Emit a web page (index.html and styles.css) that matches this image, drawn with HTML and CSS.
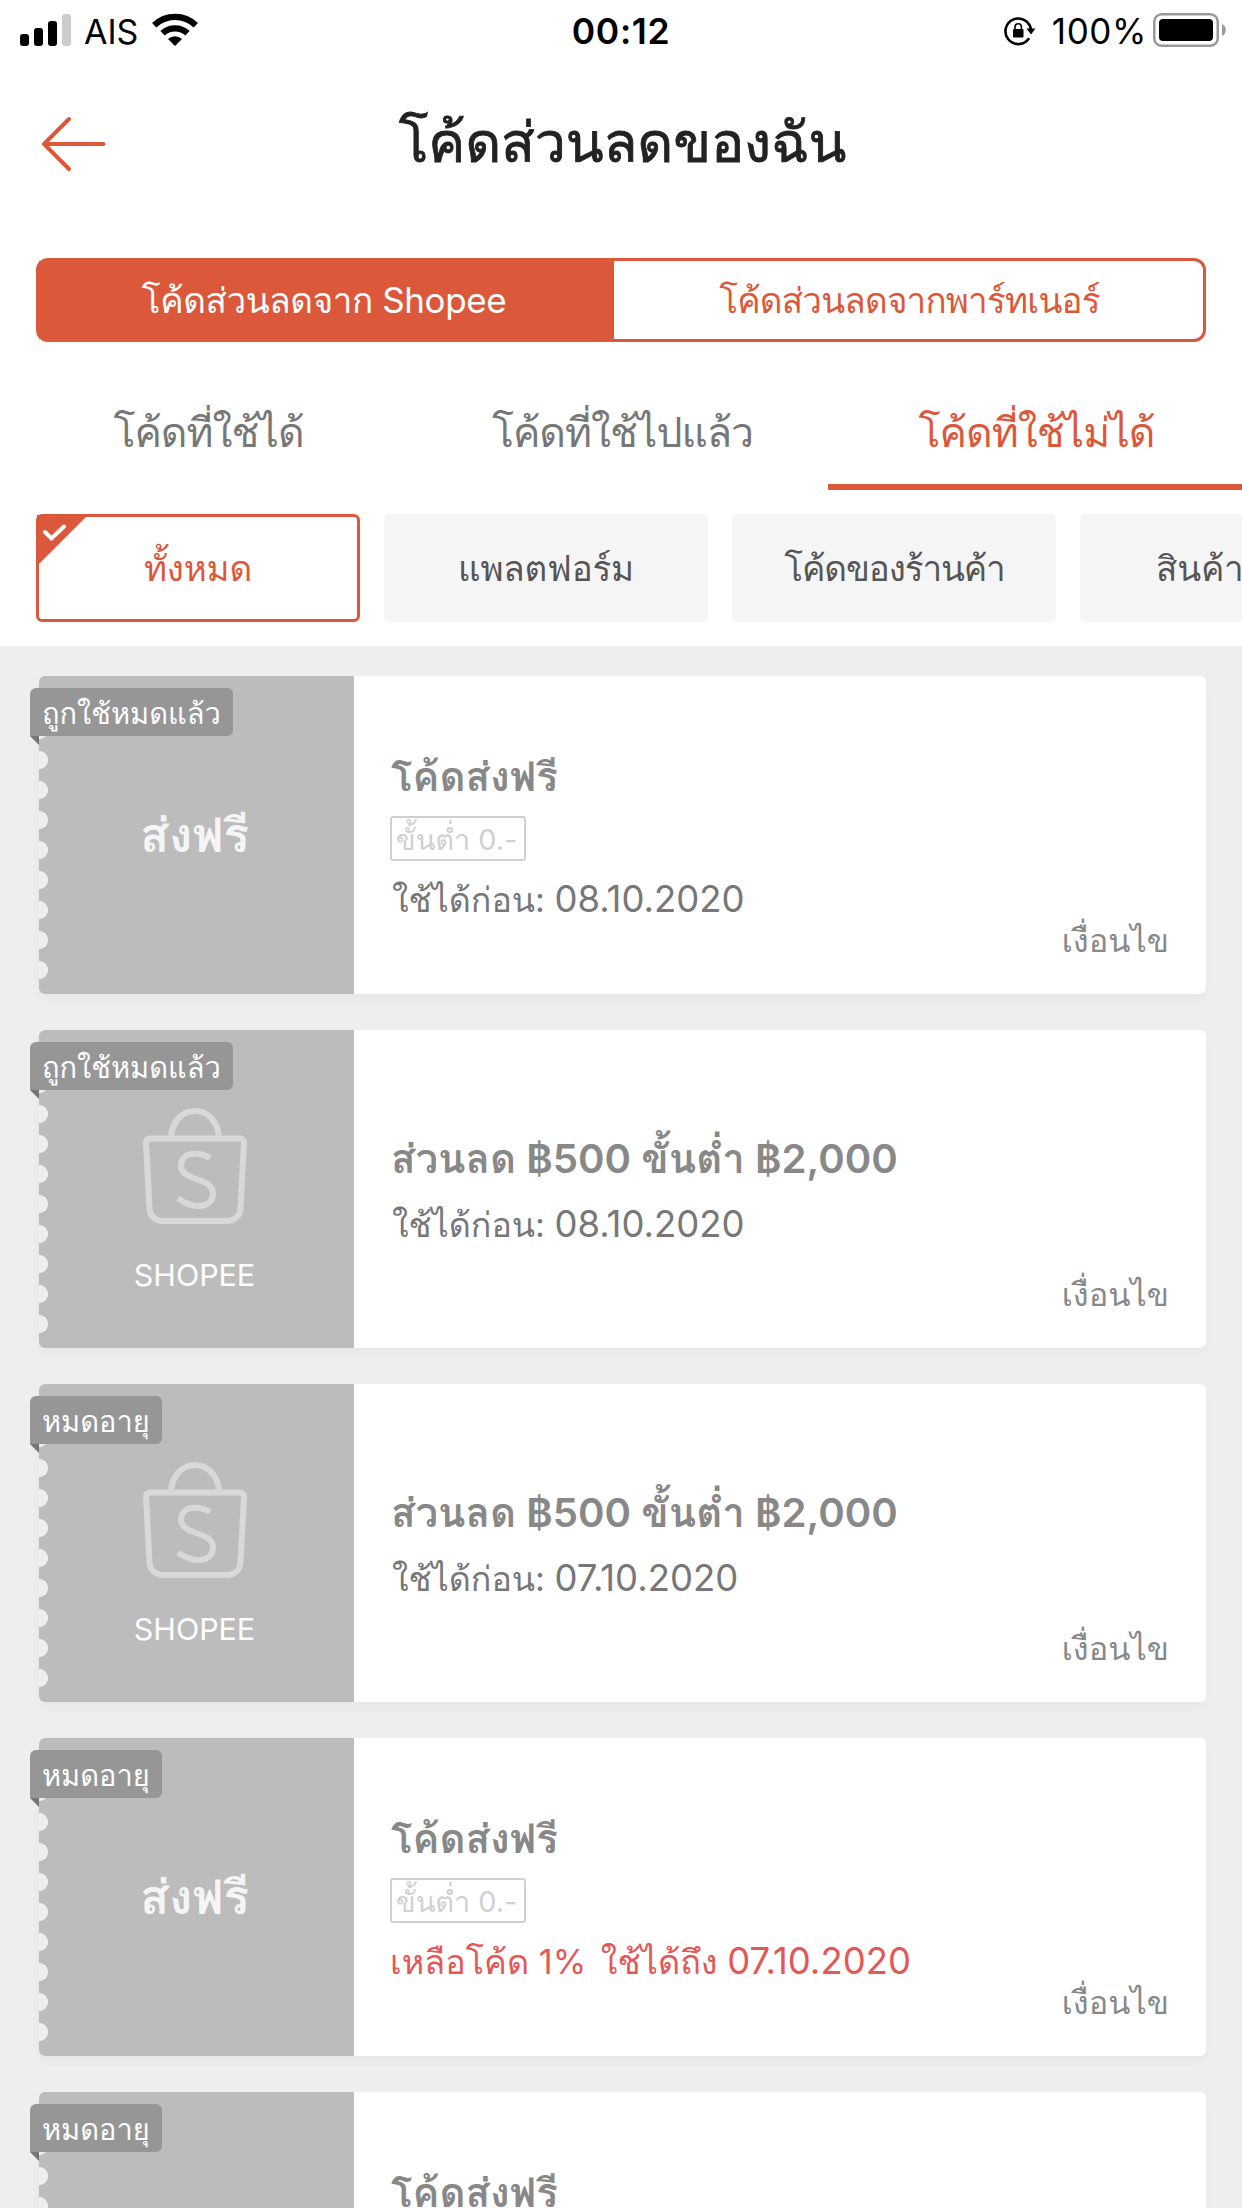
FILE: index.html
```
<!DOCTYPE html>
<html lang="th">
<head>
<meta charset="utf-8">
<title>โค้ดส่วนลดของฉัน</title>
<link rel="stylesheet" href="styles.css">
</head>
<body>
<svg class="symbols" aria-hidden="true">
  <symbol id="bag" viewBox="0 0 104 116">
    <g fill="none" stroke="currentColor" stroke-width="6">
      <path d="M28 29C29 14 39 3 52 3s23 11 24 26"/>
      <path d="M7 30.500h90a4 4 0 0 1 4 4L97.500 100a13 13 0 0 1-12.500 13H19a13 13 0 0 1-12.500-13L3 34.500a4 4 0 0 1 4-4z"/>
      <path d="M67 50C56 43 38 44 38 57.500c0 16.500 32 11 32 28 0 15-20 16-35 5"/>
    </g>
  </symbol>
</svg>

<header class="status">
  <div class="status-left">
    <svg width="51" height="32" viewBox="0 0 51 32"><rect y="20" width="9" height="12" rx="3"/><rect x="14" y="14" width="9" height="18" rx="3"/><rect x="28" y="7" width="9" height="25" rx="3"/><rect x="42" width="9" height="32" rx="3" fill="#ccc"/></svg>
    <span class="carrier">AIS</span>
    <svg width="46" height="33" viewBox="0 0 46 33"><path d="M23 33l-7-7a10.500 10.500 0 0 1 14 0z"/><path fill="none" stroke="#000" stroke-width="6.200" d="M10.500 20.300a18.500 18.500 0 0 1 25 0M2.200 12.300a30 30 0 0 1 41.600 0"/></svg>
  </div>
  <span class="time">00:12</span>
  <div class="status-right">
    <svg width="32" height="30" viewBox="0 0 32 30"><path fill="none" stroke="#000" stroke-width="2.600" stroke-linecap="round" d="M27 14A12.800 12.800 0 1 0 24.500 23"/><path d="M22.500 12.500h9L27 18.500z"/><rect x="9" y="13" width="10.500" height="8.500" rx="1"/><path fill="none" stroke="#000" stroke-width="1.600" d="M11 14v-3a3.200 3.200 0 0 1 6.400 0v3"/></svg>
    <span class="percent">100%</span>
    <svg width="74" height="34" viewBox="0 0 74 34"><rect x="1.250" y="1.250" width="63.500" height="31.500" rx="7.500" fill="none" stroke="#999" stroke-width="2.500"/><rect x="6" y="6" width="54" height="22" rx="4"/><path d="M69 11c5 2 5 10 0 12z" fill="#999"/></svg>
  </div>
</header>

<div class="navbar">
  <svg class="back" width="64" height="56" viewBox="0 0 64 56"><path fill="none" stroke="currentColor" stroke-width="4" stroke-linecap="round" stroke-linejoin="round" d="M27 3L2 28 27 53M2.500 28h59"/></svg>
  <h1>โค้ดส่วนลดของฉัน</h1>
</div>

<div class="segment">
  <div class="segment-item active">โค้ดส่วนลดจาก Shopee</div>
  <div class="segment-item">โค้ดส่วนลดจากพาร์ทเนอร์</div>
</div>

<nav class="tabs">
  <div class="tab">โค้ดที่ใช้ได้</div>
  <div class="tab">โค้ดที่ใช้ไปแล้ว</div>
  <div class="tab active">โค้ดที่ใช้ไม่ได้</div>
</nav>

<div class="chips">
  <div class="chip active"><svg class="tick" width="51" height="51" viewBox="0 0 51 51"><path fill="currentColor" d="M0 0h51L0 51z"/><path fill="none" stroke="#fff" stroke-width="4" stroke-linecap="round" d="M8 17l6.500 6.500L27 11.500"/></svg>ทั้งหมด</div>
  <div class="chip">แพลตฟอร์ม</div>
  <div class="chip tight">โค้ดของร้านค้า</div>
  <div class="chip cut">สินค้า</div>
</div>

<main class="list">
  <article class="card">
    <div class="badge">ถูกใช้หมดแล้ว</div>
    <div class="stub"><span class="free">ส่งฟรี</span></div>
    <div class="info"><h2>โค้ดส่งฟรี</h2><span class="minimum">ขั้นต่ำ 0.-</span><p class="date">ใช้ได้ก่อน: <span class="digits">08.10.2020</span></p></div>
    <div class="terms">เงื่อนไข</div>
  </article>
  <article class="card">
    <div class="badge">ถูกใช้หมดแล้ว</div>
    <div class="stub shop"><svg class="bag"><use href="#bag"/></svg><span class="brand">SHOPEE</span></div>
    <div class="info"><h2>ส่วนลด ฿500 ขั้นต่ำ ฿2,000</h2><p class="date">ใช้ได้ก่อน: <span class="digits">08.10.2020</span></p></div>
    <div class="terms">เงื่อนไข</div>
  </article>
  <article class="card">
    <div class="badge">หมดอายุ</div>
    <div class="stub shop"><svg class="bag"><use href="#bag"/></svg><span class="brand">SHOPEE</span></div>
    <div class="info"><h2>ส่วนลด ฿500 ขั้นต่ำ ฿2,000</h2><p class="date">ใช้ได้ก่อน: <span class="digits">07.10.2020</span></p></div>
    <div class="terms">เงื่อนไข</div>
  </article>
  <article class="card">
    <div class="badge">หมดอายุ</div>
    <div class="stub"><span class="free">ส่งฟรี</span></div>
    <div class="info"><h2>โค้ดส่งฟรี</h2><span class="minimum">ขั้นต่ำ 0.-</span><p class="date urgent">เหลือโค้ด 1% <span class="until">ใช้ได้ถึง</span> <span class="digits">07.10.2020</span></p></div>
    <div class="terms">เงื่อนไข</div>
  </article>
  <article class="card">
    <div class="badge">หมดอายุ</div>
    <div class="stub"></div>
    <div class="info"><h2>โค้ดส่งฟรี</h2></div>
  </article>
</main>
</body>
</html>
```
FILE: styles.css
```
:root {
  --brand: #dc583b;
  --page: #eee;
}

* { box-sizing: border-box; }

body {
  margin: 0;
  height: 2208px;
  display: flex;
  flex-direction: column;
  overflow: hidden;
  background: #fff;
  color: #222;
  font-family: Inter, Loma, "Noto Sans", sans-serif;
  white-space: nowrap;
}

body > * { flex: none; }
h1, h2, p { margin: 0; }
svg { display: block; flex: none; }
.symbols { position: absolute; width: 0; height: 0; }

/* Status bar */
.status {
  height: 62px;
  padding: 0 15px 0 20px;
  display: grid;
  grid-template-columns: 1fr auto 1fr;
  align-items: center;
  color: #000;
}
.status-left, .status-right { display: flex; align-items: center; }
.status-left > svg:first-child { margin-top: -2px; }
.status-left > svg:last-child { margin-top: -3px; }
.status-right { justify-content: flex-end; }
.status-right > svg:last-child { margin-top: -2px; }
.carrier { margin: 0 14px 0 13px; font-size: 34px; }
.time { margin-right: 5px; font-size: 35.500px; font-weight: 600; letter-spacing: .6px; }
.percent { margin: 0 6px 0 16px; font-size: 35px; letter-spacing: .6px; }

/* Title bar */
.navbar {
  height: 161px;
  padding: 3px 42px 0;
  display: grid;
  grid-template-columns: 64px 1fr 64px;
  align-items: center;
}
.back { color: var(--brand); }
h1 {
  font-size: 55.500px;
  line-height: 80px;
  margin: -4px -3px 0 0;
  font-weight: 400;
  letter-spacing: -.2px;
  text-align: center;
  -webkit-text-stroke: .8px currentColor;
}

/* Source switch */
.segment {
  height: 84px;
  margin: 35px 36px 0;
  display: grid;
  grid-template-columns: 575px 1fr;
  border: 3px solid var(--brand);
  border-radius: 12px;
  color: var(--brand);
  font-size: 35px;
  line-height: 78px;
  text-align: center;
}
.segment-item { letter-spacing: -.8px; padding-left: 2px; }
.segment-item.active { background: var(--brand); color: #fff; letter-spacing: -.4px; padding: 0 5px 0 0; }

/* Tabs */
.tabs {
  height: 116px;
  margin-top: 32px;
  display: grid;
  grid-template-columns: repeat(3, 1fr);
  color: #777;
  font-size: 41px;
  line-height: 104px;
  letter-spacing: -1px;
  text-align: center;
}
.tab { padding: 6px 0 0 3px; border-bottom: 6px solid transparent; }
.tab.active { color: var(--brand); border-color: var(--brand); }

/* Filters */
.chips {
  height: 108px;
  margin: 24px 0 24px 36px;
  display: flex;
  gap: 24px;
  overflow: hidden;
  font-size: 35px;
  line-height: 108px;
  color: #555;
}
.chip {
  position: relative;
  flex: 0 0 324px;
  background: #f5f5f5;
  border-radius: 6px;
  letter-spacing: -.2px;
  text-align: center;
}
.chip.active {
  line-height: 102px;
  border: 3px solid var(--brand);
  background: #fff;
  color: var(--brand);
}
.chip.tight { letter-spacing: -1.100px; padding-left: 1px; }
.chip.cut { padding-left: 76px; text-align: left; }
.tick { position: absolute; left: -2px; top: -2px; }

/* Voucher list */
.list {
  flex: 1 0 0;
  padding: 30px 36px 0 39px;
  display: flex;
  flex-direction: column;
  gap: 36px;
  background: var(--page);
  overflow: hidden;
}
.card {
  position: relative;
  flex: 0 0 318px;
  display: flex;
  background: #fff;
  border-radius: 6px;
  box-shadow: 0 5px 10px rgba(0, 0, 0, .035);
}
.stub {
  position: relative;
  width: 315px;
  padding-right: 4px;
  display: flex;
  flex-direction: column;
  align-items: center;
  justify-content: center;
  background: #bcbcbc;
  border-radius: 6px 0 0 6px;
  color: #fff;
}
/* Perforated edge */
.stub::before {
  content: "";
  position: absolute;
  left: 0;
  top: 39px;
  width: 9px;
  height: 270px;
  background: radial-gradient(circle at 0 50%, var(--page) 8.600px, transparent 9.400px) 0 0 / 9px 30px;
}
.free {
  color: #f5f5f5;
  font-size: 47.500px;
  line-height: 60px;
  font-weight: 700;
}
.stub.shop { justify-content: flex-start; padding-top: 78px; }
.bag { width: 104px; height: 116px; color: #d8d8d8; }
.brand { margin-top: 31px; font-size: 30.400px; line-height: 40px; }

.badge {
  position: absolute;
  z-index: 1;
  left: -9px;
  top: 12px;
  height: 48px;
  padding: 0 12px;
  background: #969696;
  border-radius: 6px 6px 6px 0;
  color: #fff;
  font-size: 29px;
  line-height: 51px;
}
.badge::after {
  content: "";
  position: absolute;
  left: 0;
  top: 48px;
  width: 9px;
  height: 9px;
  background: #757575;
  clip-path: polygon(0 0, 100% 0, 100% 100%);
}

.info {
  flex: 1;
  padding: 1px 0 0 36px;
  display: flex;
  flex-direction: column;
  align-items: flex-start;
  justify-content: center;
}
h2 { padding-left: 1px; color: #888; font-size: 40.200px; line-height: 58px; font-weight: 600; }
.minimum {
  height: 45px;
  margin: 10px 0 2px;
  padding: 0 7px 0 4px;
  border: 2px solid #d0d0d0;
  border-radius: 3px;
  color: #d0d0d0;
  font-size: 28.800px;
  line-height: 43px;
}
.date { margin-top: 12px; padding-left: 2px; color: #777; font-size: 34px; line-height: 48px; }
.digits { font-size: 36.500px; }
.date.urgent { padding-left: 0; color: #e45757; font-size: 34.200px; }
.until { margin-left: 5px; }
.terms {
  align-self: flex-end;
  margin: 0 37px 33px 0;
  color: #888;
  font-size: 32.500px;
  line-height: 40px;
}

/* The last voucher continues below the fold */
.card:last-child .info { justify-content: flex-start; padding-top: 72px; }
```
